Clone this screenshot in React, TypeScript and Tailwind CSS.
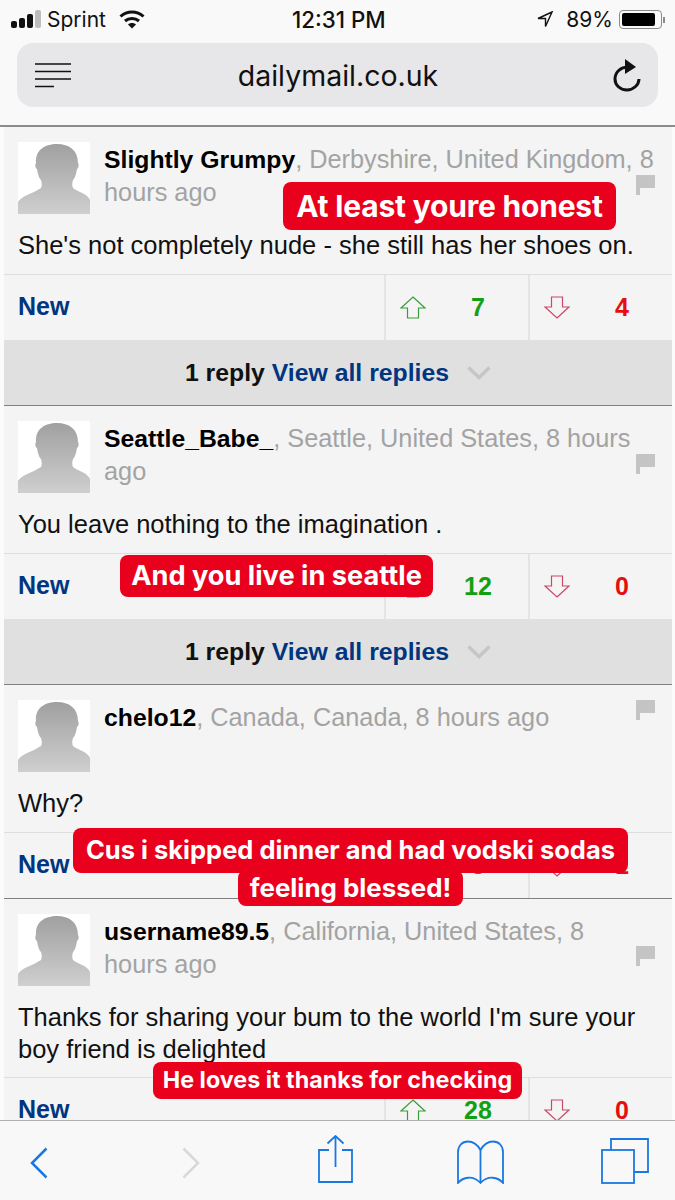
import type { ReactNode } from "react";

const sans = "font-['Liberation_Sans',Arial,sans-serif]";

function Avatar() {
  return (
    <svg width="72" height="72" viewBox="0 0 72 72" className="shrink-0 bg-white">
      <defs>
        <linearGradient id="sil" x1="0" y1="0" x2="0" y2="1">
          <stop offset="0" stopColor="#a0a0a0" />
          <stop offset="1" stopColor="#cfcfcf" />
        </linearGradient>
      </defs>
      <path
        d="M0 72V60C3 54 14 52 23 46C24 44 24 41 23 38C21 36 20 33 19 27C17 26 17 22 18 21C17 8 27 2 39 2C51 2 60 8 60 21C61 22 61 26 59 27C58 33 57 36 55 38C54 41 54 44 55 46C60 50 70 52 72 58V72Z"
        fill="url(#sil)"
      />
    </svg>
  );
}

function Flag({ className }: { className: string }) {
  return (
    <svg width="19" height="20" viewBox="0 0 19 20" className={className}>
      <path d="M0 0H19V13H4V20H0Z" fill="#c4c4c4" />
    </svg>
  );
}

function UpArrow() {
  return (
    <svg width="26" height="23" viewBox="0 0 26 23" fill="none" className="shrink-0">
      <path d="M13 1L25 12H18.5V22H7.5V12H1Z" stroke="#3a9d3a" strokeWidth="1.2" />
    </svg>
  );
}

function DownArrow() {
  return (
    <svg width="26" height="23" viewBox="0 0 26 23" fill="none" className="shrink-0">
      <path d="M13 22L25 11H18.5V1H7.5V11H1Z" stroke="#c8496a" strokeWidth="1.2" />
    </svg>
  );
}

function Chevron() {
  return (
    <svg width="24" height="14" viewBox="0 0 24 14" fill="none">
      <path d="M1.5 1.5L12 11.5L22.5 1.5" stroke="#c6c6c6" strokeWidth="3.5" />
    </svg>
  );
}

type CommentProps = {
  name: string;
  meta: ReactNode;
  text: string;
  up: number;
  down: number;
  flagTop: string;
  bodyPb?: string;
  replies?: boolean;
};

function Comment({ name, meta, text, up, down, flagTop, bodyPb = "pb-[13px]", replies }: CommentProps) {
  return (
    <div className="relative bg-[#f4f4f4] border-b border-[#808080] ml-[4px] mr-[3px]">
      <div className={`pl-[14px] pr-[10px] pt-[15px] ${bodyPb}`}>
        <div className="flex gap-[14px] h-[72px]">
          <Avatar />
          <div className="mt-[1px] text-[25.3px] leading-[32px] text-[#a3a3a3] w-[553px] shrink-0">
            <span className="font-bold text-black text-[24.75px]">{name}</span>, {meta}
          </div>
        </div>
        <div className="mt-[15px] text-[25.5px] leading-[32px] text-[#111]">{text}</div>
      </div>
      <Flag className={`absolute right-[17px] ${flagTop}`} />
      <div className="flex h-[66px] border-t border-[#dedede]">
        <div className="w-[380px] pl-[14px] pb-[2px] flex items-center text-[25px] font-bold text-[#003580]">New</div>
        <div className="w-[144px] border-l-2 border-[#e4e4e4] flex items-center pl-[14px]">
          <UpArrow />
          <span className="w-[80px] ml-[12px] text-center text-[25px] font-bold text-[#12a012]">{up}</span>
        </div>
        <div className="flex-1 border-l-2 border-[#e4e4e4] flex items-center pl-[14px]">
          <DownArrow />
          <span className="w-[80px] ml-[12px] text-center text-[25px] font-bold text-[#e60f0f]">{down}</span>
        </div>
      </div>
      {replies && (
        <div className="h-[65px] bg-[#e0e0e0] flex items-center justify-center gap-[18px] text-[24.8px] font-bold">
          <span className="text-[#111]">
            1 reply <span className="text-[#003580]">View all replies</span>
          </span>
          <Chevron />
        </div>
      )}
    </div>
  );
}

function Sticker({ className, children }: { className: string; children: string }) {
  return (
    <div className={`absolute bg-[#e8001c] text-white font-bold font-['Inter',sans-serif] rounded-[8px] flex items-center justify-center whitespace-nowrap ${className}`}>
      {children}
    </div>
  );
}

export default function App() {
  return (
    <div className={`relative w-[675px] h-[1200px] overflow-hidden bg-[#fbfbfb] flex flex-col ${sans}`}>
      {/* Status + address bar */}
      <header className="bg-[#f9f9f9] h-[127px] shrink-0 border-b-2 border-[#8c8c8c]">
        <div className="relative h-[39px] mb-[4px] flex items-center justify-between pl-[11px] pr-[10px] text-[21px] text-[#111] font-['Inter',sans-serif]">
          <div className="flex items-center">
            <svg width="30" height="19" viewBox="0 0 30 19">
              <rect x="0" y="11" width="6" height="7" rx="2" fill="#111" />
              <rect x="8" y="8" width="6" height="10" rx="2" fill="#111" />
              <rect x="16" y="4" width="6" height="14" rx="2" fill="#111" />
              <rect x="24" y="0" width="6" height="18" rx="2" fill="#bdbdbd" />
            </svg>
            <span className="ml-[6px]">Sprint</span>
            <svg width="26" height="19" viewBox="0 0 26 19" className="ml-[13px]" fill="none" stroke="#111" strokeWidth="3">
              <path d="M1.5 6.5C8 .5 18 .5 24.5 6.5" />
              <path d="M6 11C10 7.5 16 7.5 20 11" />
              <path d="M13 18.500L9 14.500C11 12.500 15 12.500 17 14.500Z" fill="#111" stroke="none" />
            </svg>
          </div>
          <span className="absolute left-[292px] text-[22.3px] font-medium">12:31 PM</span>
          <div className="flex items-center">
            <svg width="16" height="17" viewBox="0 0 16 17" fill="none" stroke="#111" strokeWidth="1.4">
              <path d="M15 1L1 7.500H8.500V15.500Z" />
            </svg>
            <span className="ml-[13px]">89%</span>
            <div className="ml-[6px] w-[43px] h-[19px] border border-[#8a8a8a] rounded-[4px] p-[2px]">
              <div className="h-full w-[88%] bg-black rounded-[2px]" />
            </div>
            <div className="w-[2px] h-[6px] bg-[#8a8a8a] ml-[1px]" />
          </div>
        </div>
        <div className="mx-[17px] h-[64px] rounded-[16px] bg-[#e7e7ea] flex items-center justify-between pl-[18px] pr-[17px]">
          <svg width="36" height="25" viewBox="0 0 36 25" stroke="#111" strokeWidth="1.500">
            <path d="M0 1H36M0 8.500H36M0 16H36" />
            <path d="M0 23.500H19" />
          </svg>
          <span className="mr-[8px] mt-[3px] text-[28.5px] text-[#111] font-['Inter',sans-serif]">dailymail.co.uk</span>
          <svg width="28" height="33" viewBox="0 0 28 33" fill="none">
            <path d="M17 8.500C8 7 2 13 2 20C2 26 7 31 14 31C20 31 26 26 26 20" stroke="#111" strokeWidth="3" />
            <path d="M12 0L23 8L12 15Z" fill="#111" />
          </svg>
        </div>
      </header>

      {/* Comments */}
      <main className="flex-1 overflow-hidden">
        <Comment
          name="Slightly Grumpy"
          meta="Derbyshire, United Kingdom, 8 hours ago"
          text="She's not completely nude - she still has her shoes on."
          up={7}
          down={4}
          flagTop="top-[48px]"
          replies
        />
        <Comment
          name="Seattle_Babe_"
          meta="Seattle, United States, 8 hours ago"
          text="You leave nothing to the imagination ."
          up={12}
          down={0}
          flagTop="top-[48px]"
          replies
        />
        <Comment
          name="chelo12"
          meta="Canada, Canada, 8 hours ago"
          text="Why?"
          up={3}
          down={1}
          flagTop="top-[15px]"
        />
        <Comment
          name="username89.5"
          meta={<>California, United States, 8<br />hours ago</>}
          text="Thanks for sharing your bum to the world I'm sure your boy friend is delighted"
          up={28}
          down={0}
          flagTop="top-[47px]"
          bodyPb="pb-[12px]"
        />
      </main>

      {/* Safari toolbar */}
      <footer className="relative h-[80px] shrink-0 bg-[#f8f8f8] border-t border-[#b0b0b0] flex items-center pl-[30px]">
        <svg width="18" height="32" viewBox="0 0 18 32" fill="none" stroke="#1a78e0" strokeWidth="2.500" className="mt-[4px]">
          <path d="M16.500 1.500L2 16L16.500 30.500" />
        </svg>
        <svg width="18" height="32" viewBox="0 0 18 32" fill="none" stroke="#d8d8d8" strokeWidth="2.500" className="mt-[4px] ml-[134px]">
          <path d="M1.500 1.500L16 16L1.500 30.500" />
        </svg>
        <svg width="35" height="48" viewBox="0 0 35 48" fill="none" stroke="#1a78e0" strokeWidth="1.800" className="-mt-[3px] ml-[118px]">
          <path d="M11 15H1V47H34V15H24" />
          <path d="M17.500 1V32M9.500 8.500L17.500 1L25.500 8.500" />
        </svg>
        <svg width="47" height="44" viewBox="0 0 47 44" fill="none" stroke="#1a78e0" strokeWidth="1.800" className="mt-[3px] ml-[104px]">
          <path d="M23.500 10C20 4 15 1.500 11 1.500C5 1.500 1 6 1 12V43C6 37 16 35 23.500 43C31 35 41 37 46 43V12C46 6 42 1.500 36 1.500C32 1.500 27 4 23.500 10Z" />
          <path d="M23.500 10V43" />
        </svg>
        <svg width="48" height="46" viewBox="0 0 48 46" fill="none" stroke="#1a78e0" strokeWidth="1.800" className="ml-[97px]">
          <path d="M10 12V1H47V34H33" />
          <rect x="1" y="12" width="32" height="33" />
        </svg>
      </footer>

      {/* Story stickers on top of the screenshot */}
      <Sticker className="left-[283px] top-[182px] w-[333px] h-[48px] text-[30px] tracking-[-0.2px]">At least youre honest</Sticker>
      <Sticker className="left-[120px] top-[555px] w-[313px] h-[42px] text-[27.2px]">And you live in seattle</Sticker>
      <Sticker className="left-[73px] top-[828px] w-[555px] h-[45px] text-[25.5px]">Cus i skipped dinner and had vodski sodas</Sticker>
      <Sticker className="left-[238px] top-[870px] w-[225px] h-[36px] text-[25.9px]">feeling blessed!</Sticker>
      <Sticker className="left-[153px] top-[1062px] w-[369px] h-[37px] text-[23.300px]">He loves it thanks for checking</Sticker>
    </div>
  );
}
